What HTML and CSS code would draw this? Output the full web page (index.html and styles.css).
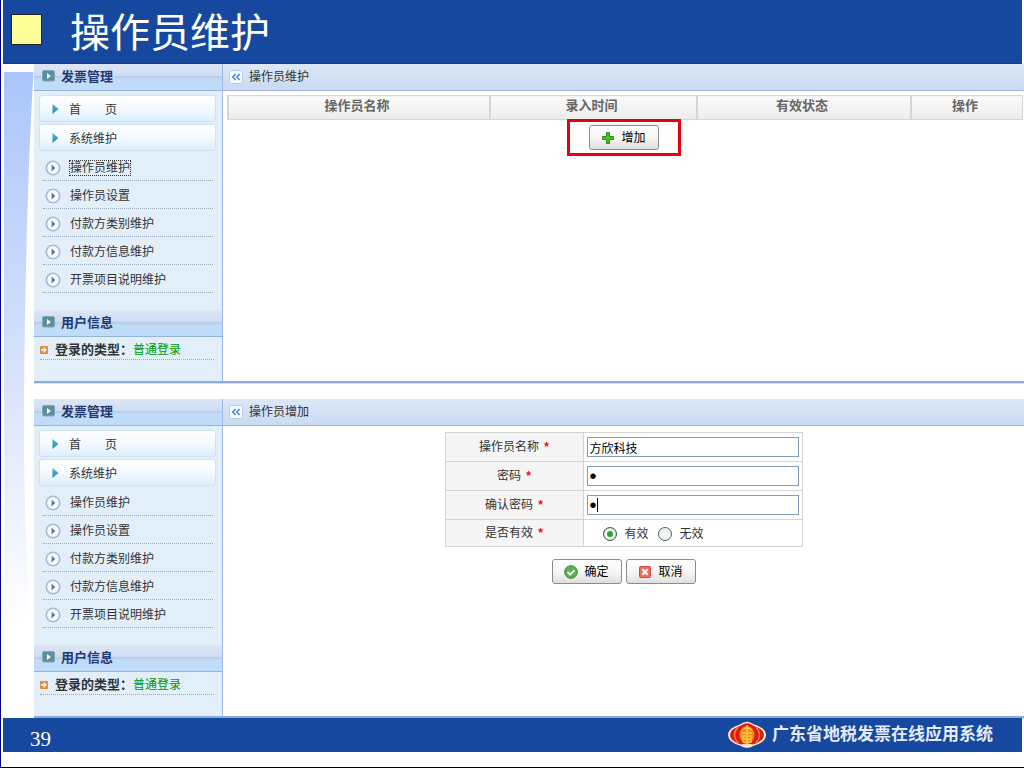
FILE: index.html
```html
<!DOCTYPE html>
<html lang="zh-CN">
<head>
  <meta charset="UTF-8">
  <meta name="viewport" content="width=device-width, initial-scale=1.0">
  <title>操作员维护</title>
  <link rel="stylesheet" href="styles.css">
</head>
<body>

<!-- shared icons -->
<svg class="sprite" aria-hidden="true">
  <defs>
    <linearGradient id="tri-fill" x1="0" y1="0" x2="0" y2="1">
      <stop offset="0" stop-color="#5ab4d4"/>
      <stop offset="1" stop-color="#2a84ba"/>
    </linearGradient>
    <linearGradient id="swoosh-fill" x1="0" y1="0" x2="0" y2="1">
      <stop offset="0" stop-color="#abc6fb"/>
      <stop offset="0.5" stop-color="#d3e0fd"/>
      <stop offset="1" stop-color="#ffffff"/>
    </linearGradient>
  </defs>
  <symbol id="i-head" viewBox="0 0 13 12">
    <rect x="0.5" y="0.5" width="12" height="10.5" rx="1.5" fill="#5d8f98" stroke="#7fa7b4"/>
    <path d="M5 3l4 3-4 3z" fill="#fff"/>
  </symbol>
  <symbol id="i-tri" viewBox="0 0 7 10">
    <path d="M0.5 0L6.5 5 0.5 10z" fill="url(#tri-fill)"/>
  </symbol>
  <symbol id="i-round" viewBox="0 0 16 16">
    <circle cx="8" cy="8" r="6.7" fill="#f7faff" stroke="#a3b7d6" stroke-width="1.6"/>
    <path d="M6.600 4.400l3.600 3.600-3.600 3.600z" fill="#5271b4"/>
  </symbol>
  <symbol id="i-mark" viewBox="0 0 8 8">
    <rect width="8" height="8" rx="1" fill="#e5893f"/>
    <path d="M1 4h4M3.6 1.6L6 4 3.6 6.4" fill="none" stroke="#fff" stroke-width="1.3"/>
  </symbol>
  <symbol id="i-fold" viewBox="0 0 14 14">
    <rect x="0.5" y="0.5" width="13" height="13" rx="2" fill="#f4f9ff" stroke="#b5cdec"/>
    <path d="M6.6 4L3.8 7l2.8 3M10.6 4L7.8 7l2.8 3" fill="none" stroke="#4a7fbe" stroke-width="1.5"/>
  </symbol>
</svg>

<header class="title-bar">
  <span class="title-mark"></span>
  <h1>操作员维护</h1>
</header>

<main class="slide">
  <svg class="swoosh" viewBox="0 0 31 653" preserveAspectRatio="none" aria-hidden="true">
    <path d="M1 8H30.500Q23 130 21 330Q20 440 27 560H1z" fill="url(#swoosh-fill)"/>
  </svg>

  <div class="screens">
    <section class="screen">
      <aside class="sidebar">
        <h2 class="side-head"><svg><use href="#i-head"/></svg>发票管理</h2>
        <nav class="menu">
          <a class="menu-box" href="#"><svg><use href="#i-tri"/></svg><span>首　　页</span></a>
          <a class="menu-box" href="#"><svg><use href="#i-tri"/></svg><span>系统维护</span></a>
          <ul>
            <li><svg><use href="#i-round"/></svg><a class="focused" href="#">操作员维护</a></li>
            <li><svg><use href="#i-round"/></svg><a href="#">操作员设置</a></li>
            <li><svg><use href="#i-round"/></svg><a href="#">付款方类别维护</a></li>
            <li><svg><use href="#i-round"/></svg><a href="#">付款方信息维护</a></li>
            <li><svg><use href="#i-round"/></svg><a href="#">开票项目说明维护</a></li>
          </ul>
        </nav>
        <h2 class="side-head"><svg><use href="#i-head"/></svg>用户信息</h2>
        <p class="login-type"><svg><use href="#i-mark"/></svg><b>登录的类型：</b><span>普通登录</span></p>
      </aside>
      <div class="content">
        <h2 class="content-head"><svg><use href="#i-fold"/></svg>操作员维护</h2>
        <table class="list">
          <thead>
            <tr>
              <th class="col-name">操作员名称</th>
              <th class="col-time">录入时间</th>
              <th class="col-state">有效状态</th>
              <th>操作</th>
            </tr>
          </thead>
        </table>
        <div class="highlight">
          <button class="btn" type="button">
            <svg viewBox="0 0 14 14"><path d="M5.500 1.500h3v4h4v3h-4v4h-3v-4h-4v-3h4z" fill="#43c02c" stroke="#24921b"/></svg>增加
          </button>
        </div>
      </div>
    </section>

    <section class="screen">
      <aside class="sidebar">
        <h2 class="side-head"><svg><use href="#i-head"/></svg>发票管理</h2>
        <nav class="menu">
          <a class="menu-box" href="#"><svg><use href="#i-tri"/></svg><span>首　　页</span></a>
          <a class="menu-box" href="#"><svg><use href="#i-tri"/></svg><span>系统维护</span></a>
          <ul>
            <li><svg><use href="#i-round"/></svg><a href="#">操作员维护</a></li>
            <li><svg><use href="#i-round"/></svg><a href="#">操作员设置</a></li>
            <li><svg><use href="#i-round"/></svg><a href="#">付款方类别维护</a></li>
            <li><svg><use href="#i-round"/></svg><a href="#">付款方信息维护</a></li>
            <li><svg><use href="#i-round"/></svg><a href="#">开票项目说明维护</a></li>
          </ul>
        </nav>
        <h2 class="side-head"><svg><use href="#i-head"/></svg>用户信息</h2>
        <p class="login-type"><svg><use href="#i-mark"/></svg><b>登录的类型：</b><span>普通登录</span></p>
      </aside>
      <div class="content">
        <h2 class="content-head"><svg><use href="#i-fold"/></svg>操作员增加</h2>
        <form>
          <table class="form-table">
            <tr>
              <th><label for="name">操作员名称</label> <i>*</i></th>
              <td><input class="text" id="name" type="text" value="方欣科技"></td>
            </tr>
            <tr>
              <th><label for="pwd">密码</label> <i>*</i></th>
              <td><input class="text" id="pwd" type="password" value="1"></td>
            </tr>
            <tr>
              <th><label for="pwd2">确认密码</label> <i>*</i></th>
              <td class="typing"><input class="text" id="pwd2" type="password" value="1"></td>
            </tr>
            <tr>
              <th>是否有效 <i>*</i></th>
              <td>
                <div class="radios">
                  <label><input type="radio" name="valid" checked>有效</label>
                  <label><input type="radio" name="valid">无效</label>
                </div>
              </td>
            </tr>
          </table>
          <div class="actions">
            <button class="btn" type="button">
              <svg viewBox="0 0 14 14"><circle cx="7" cy="7" r="6.3" fill="#5bb050" stroke="#39883a"/><path d="M3.600 7l2.500 2.600 4.500-4.400" fill="none" stroke="#fff" stroke-width="2"/></svg>确定
            </button>
            <button class="btn" type="button">
              <svg viewBox="0 0 14 14"><rect x="1.500" y="1.500" width="11" height="11" rx="1" fill="#ee6a5c" stroke="#d9483c"/><path d="M4.300 4.300l5.400 5.400M9.700 4.300L4.300 9.700" stroke="#fff" stroke-width="2"/></svg>取消
            </button>
          </div>
        </form>
      </div>
    </section>
  </div>
</main>

<footer class="footer">
  <span class="page-no">39</span>
  <div class="brand">
    <svg viewBox="0 0 38 28" aria-hidden="true">
      <path d="M12 3.500Q19-2 26 3.500 38 7 38 14T26 24.500Q19 29 12 24.500 0 21 0 14T12 3.500z" fill="#fbe9c8"/>
      <path d="M13 4.500Q19 0 25 4.500 36 8 36 14T25 23.500Q19 27 13 23.500 2 20 2 14T13 4.500z" fill="#dc1a16"/>
      <path d="M10 6Q3 14 10 22M28 6Q35 14 28 22" fill="none" stroke="#f2803c" stroke-width="1.500"/>
      <ellipse cx="19" cy="14" rx="7.500" ry="9" fill="#ee8a22"/>
      <path d="M19 4v7M14 9l5-3 5 3M14 12h10M15 15h8v6h-8zM19 12v9M15 18h8" fill="none" stroke="#fbc83c" stroke-width="1.300"/>
      <path d="M12 24Q19 21 26 24 19 29 12 24z" fill="#fbe9c8"/>
    </svg>
    <span>广东省地税发票在线应用系统</span>
  </div>
</footer>

</body>
</html>
```

FILE: styles.css
```css
* {
  box-sizing: border-box;
}

body {
  margin: 0;
  min-height: 100vh;
  display: flex;
  flex-direction: column;
  background: #fff;
  border-left: 1px solid #00007c;
  border-bottom: 1px solid #000;
  padding: 0 2px 15px;
  font-family: "Liberation Sans", "Noto Sans CJK SC", sans-serif;
  font-size: 12px;
  line-height: 16px;
  color: #333;
}

h1, h2, p, ul {
  margin: 0;
  padding: 0;
}

svg {
  display: block;
  flex: none;
}

.sprite {
  position: absolute;
  width: 0;
  height: 0;
}

/* title */
.title-bar {
  display: flex;
  align-items: center;
  gap: 28px;
  height: 64px;
  padding: 0 0 4px 8px;
  background: #17489f;
  border-bottom: 1px solid #1a3590;
}

.title-mark {
  width: 31px;
  height: 31px;
  background: #ffff99;
  border: 1px solid #222;
}

.title-bar h1 {
  color: #fff;
  font-family: "Noto Sans CJK SC", sans-serif;
  font-size: 40px;
  line-height: 60px;
  font-weight: 400;
}

/* body of the page */
.slide {
  flex: 1;
  display: flex;
  margin-right: -2px;
}

.swoosh {
  width: 31px;
  height: auto;
}

.screens {
  flex: 1;
  display: flex;
  flex-direction: column;
  gap: 16px;
}

.screen {
  display: flex;
  height: 319px;
  border-bottom: 2px solid #8ea9e0;
  box-shadow: 0 1px #d3e0f7;
}

.sidebar {
  width: 189px;
  background: #e2eff9;
  border-right: 1px solid #9bb8e6;
}

.side-head {
  display: flex;
  align-items: center;
  gap: 6px;
  height: 27px;
  padding-left: 8px;
  background: linear-gradient(#dce6f6, #cfdcf1 45%, #b3cae6 46%, #c2dcf9 60%, #bfdcfb);
  border-bottom: 1px solid #94b4dc;
  color: #1f3a70;
  font-size: 13px;
}

.side-head svg {
  width: 13px;
  height: 12px;
  margin-bottom: 3px;
}

.menu {
  display: flex;
  flex-direction: column;
  gap: 2px;
  height: 219px;
  padding: 4px 6px 0 5px;
}

.menu a {
  color: #333;
  text-decoration: none;
}

.menu-box {
  display: flex;
  align-items: center;
  gap: 10px;
  height: 27px;
  padding-left: 12px;
  background: linear-gradient(#fff, #f4faff 50%, #dceefe);
  border: 1px solid #cfe2f5;
  border-radius: 3px;
}

.menu-box span {
  padding-top: 3px;
}

.menu-box svg {
  width: 7px;
  height: 10px;
}

.menu ul {
  padding: 0 3px 0 4px;
  list-style: none;
}

.menu li {
  display: flex;
  align-items: center;
  gap: 9px;
  height: 28px;
  padding: 2px 0 0 2px;
  border-bottom: 1px dotted #9aa9bd;
}

.menu li svg {
  width: 16px;
  height: 16px;
}

.menu .focused {
  outline: 1px dotted #333;
  line-height: 14px;
}

.login-type {
  display: flex;
  align-items: center;
  height: 23px;
  margin: 0 8px 0 6px;
  padding-top: 3px;
  border-bottom: 1px dotted #9aa9bd;
}

.login-type svg {
  width: 8px;
  height: 8px;
  margin-right: 7px;
}

.login-type b {
  font-size: 13px;
}

.login-type span {
  color: #009400;
}

.content {
  flex: 1;
}

.content-head {
  display: flex;
  align-items: center;
  gap: 6px;
  height: 27px;
  padding-left: 6px;
  background: linear-gradient(#dce7f6, #cbdaf2);
  border-bottom: 1px solid #a0b6dc;
  font-size: 12px;
  font-weight: 400;
}

.content-head svg {
  width: 14px;
  height: 14px;
}

/* operator list */
.list {
  width: calc(100% - 5px);
  margin: 4px 1px 0 4px;
  border-collapse: collapse;
  table-layout: fixed;
}

.list th {
  height: 24px;
  padding: 0 4px 3px 0;
  background: linear-gradient(#fbfbfb, #ececec);
  border: 1px solid #d6d6d2;
  border-left-width: 2px;
  color: #666;
  font-size: 13px;
}

.col-name {
  width: 33%;
}

.col-time {
  width: 26%;
}

.col-state {
  width: 27%;
}

.highlight {
  display: flex;
  align-items: center;
  justify-content: center;
  width: 114px;
  height: 37px;
  margin: -1px auto 0;
  border: 3px solid #e60012;
}

.btn {
  display: flex;
  align-items: center;
  justify-content: center;
  gap: 6px;
  width: 70px;
  height: 25px;
  padding: 0;
  background: linear-gradient(#fff, #f5f5f5 55%, #dedede);
  border: 1px solid #8c8c8c;
  border-radius: 3px;
  color: #000;
  font: inherit;
}

.btn svg {
  width: 14px;
  height: 14px;
}

/* add form */
.form-table {
  width: 358px;
  margin: 6px auto 0;
  border-collapse: collapse;
}

.form-table th,
.form-table td {
  height: 29px;
  padding: 0 3px;
  border: 1px solid #d4d4d4;
}

.form-table tr:last-child > * {
  height: 27px;
}

.form-table th {
  width: 138px;
  background: #f5f5f5;
  font-weight: 400;
}

.form-table i {
  margin-left: 2px;
  color: #f00;
  font-style: normal;
  font-weight: 700;
}

.text {
  display: block;
  width: 100%;
  height: 20px;
  padding: 0 2px;
  background: #fff;
  border: 1px solid #7f9db9;
  color: #000;
  font: inherit;
}

.text[type="password"] {
  font-size: 20px;
}

.typing {
  position: relative;
}

/* text cursor */
.typing::after {
  content: "";
  position: absolute;
  left: 13px;
  top: 7px;
  width: 1px;
  height: 14px;
  background: #000;
}

.radios {
  display: flex;
  gap: 9px;
  padding: 2px 0 0 16px;
}

.radios label {
  display: flex;
  align-items: center;
  gap: 8px;
}

.radios input {
  appearance: none;
  width: 14px;
  height: 14px;
  margin: 0;
  background: #f4f4f0;
  border: 1px solid #4f5f70;
  border-radius: 50%;
}

.radios input:checked {
  background: #2ea32e;
  box-shadow: inset 0 0 0 3px #f4f4f0;
}

.actions {
  display: flex;
  justify-content: center;
  gap: 4px;
  margin-top: 12px;
}

/* footer */
.footer {
  display: flex;
  align-items: center;
  justify-content: space-between;
  height: 34px;
  padding: 0 29px 0 27px;
  background: #17489f;
  color: #fff;
}

.page-no {
  padding-top: 8px;
  font-family: "Liberation Serif", serif;
  font-size: 21px;
}

.brand {
  display: flex;
  align-items: center;
  gap: 6px;
  color: #e4ecfb;
  font-size: 17px;
  font-weight: 700;
}

.brand svg {
  width: 38px;
  height: 28px;
}
```
